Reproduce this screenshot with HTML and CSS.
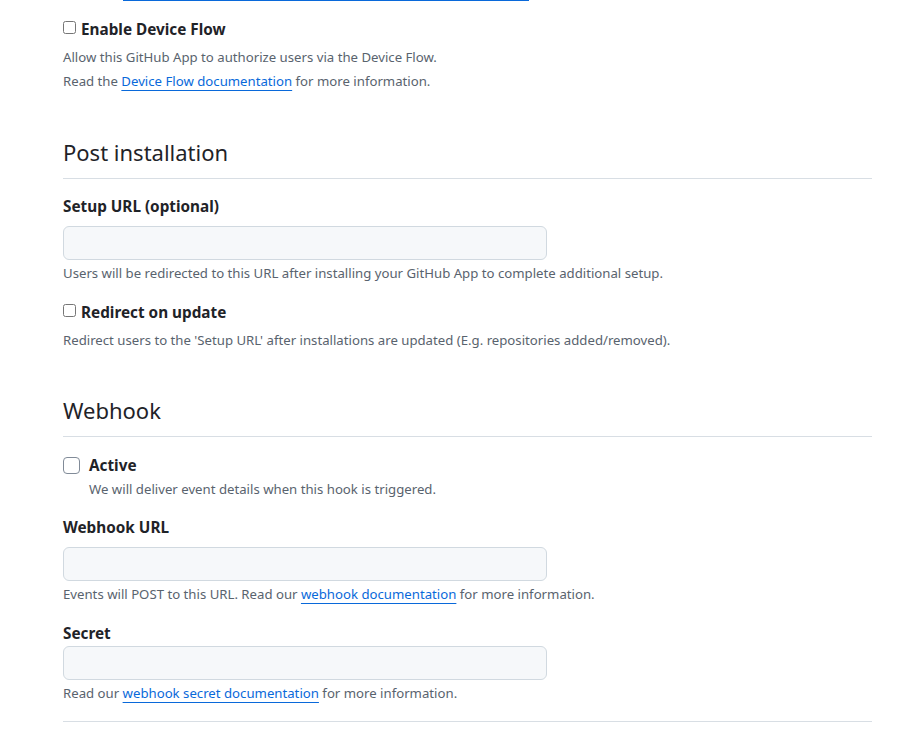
FILE: index.html
```html
<!DOCTYPE html>
<html lang="en">
<head>
<meta charset="utf-8">
<title>GitHub App settings</title>
<link rel="stylesheet" href="styles.css">
</head>
<body>
<div class="page">
  <div class="cut-link"></div>

  <div class="check-group check-first">
    <label class="check-label spaced"><input type="checkbox" class="native-check"> Enable Device Flow</label>
    <p class="note">Allow this GitHub App to authorize users via the Device Flow.</p>
    <p class="note">Read the <a href="#" class="doc-link">Device Flow documentation</a> for more information.</p>
  </div>

  <h2 class="section-title title-post">Post installation</h2>

  <div class="field field-first">
    <label class="field-label">Setup URL (optional)</label>
    <input type="text" class="text-input">
    <p class="note after-input">Users will be redirected to this URL after installing your GitHub App to complete additional setup.</p>
  </div>

  <div class="check-group">
    <label class="check-label spaced"><input type="checkbox" class="native-check"> Redirect on update</label>
    <p class="note">Redirect users to the 'Setup URL' after installations are updated (E.g. repositories added/removed).</p>
  </div>

  <h2 class="section-title title-webhook">Webhook</h2>

  <div class="primer-check">
    <span class="box"></span>
    <div class="primer-text">
      <div class="check-label">Active</div>
      <p class="note">We will deliver event details when this hook is triggered.</p>
    </div>
  </div>

  <div class="field">
    <label class="field-label">Webhook URL</label>
    <input type="text" class="text-input">
    <p class="note after-input">Events will POST to this URL. Read our <a href="#" class="doc-link">webhook documentation</a> for more information.</p>
  </div>

  <div class="field field-secret">
    <label class="field-label">Secret</label>
    <input type="text" class="text-input">
    <p class="note after-input">Read our <a href="#" class="doc-link">webhook secret documentation</a> for more information.</p>
  </div>

  <hr class="rule">
</div>
</body>
</html>
```

FILE: styles.css
```css
* { box-sizing: border-box; }
html, body { margin: 0; padding: 0; background: #ffffff; }
body {
  font-family: "Noto Sans", "Open Sans", sans-serif;
  color: #1f2328;
  font-size: 13px;
}
.page {
  padding-left: 63px;
  width: 872px;
}
.cut-link {
  margin-left: 60px;
  width: 406px;
  height: 1px;
  background: #0969da;
}
.check-group {
  padding-top: 15px;
}
.check-group.check-first {
  padding-top: 16px;
}
.check-label {
  display: flex;
  align-items: center;
  font-size: 15.3px;
  font-weight: 700;
  line-height: 24px;
  margin: 0;
}
.check-label.spaced {
  margin-bottom: 4px;
}
.native-check {
  width: 13px;
  height: 13px;
  margin: 0 5px 0 0;
  position: relative;
  top: -2px;
}
.note {
  margin: 0;
  font-size: 13.2px;
  line-height: 24px;
  color: #59636e;
}
.note.after-input {
  margin-top: 1px;
}
.doc-link {
  color: #0969da;
  text-decoration: underline;
  text-underline-offset: 4px;
  text-decoration-thickness: 1px;
}
.section-title {
  font-size: 22px;
  font-weight: 400;
  line-height: 32px;
  margin: 43px 0 0;
  padding-bottom: 10px;
  border-bottom: 1px solid #d8dee4;
}
.section-title.title-webhook {
  margin-top: 42px;
}
.field {
  padding-top: 14px;
}
.field.field-first {
  padding-top: 15px;
}
.field.field-secret {
  padding-top: 15px;
}
.field-label {
  display: block;
  font-size: 15.3px;
  font-weight: 700;
  line-height: 24px;
  margin-bottom: 8px;
}
.field-secret .field-label {
  margin-bottom: 1px;
}
.text-input {
  display: block;
  width: 484px;
  height: 34px;
  background: #f6f8fa;
  border: 1px solid #d1d9e0;
  border-radius: 6px;
  font: inherit;
}
.primer-check {
  display: flex;
  gap: 9px;
  padding-top: 16px;
}
.box {
  width: 17px;
  height: 17px;
  border: 1px solid #818b98;
  border-radius: 4px;
  margin-top: 4px;
  flex-shrink: 0;
}
.rule {
  border: 0;
  border-top: 1px solid #d8dee4;
  margin: 16px 0 0;
  width: 809px;
}
```
